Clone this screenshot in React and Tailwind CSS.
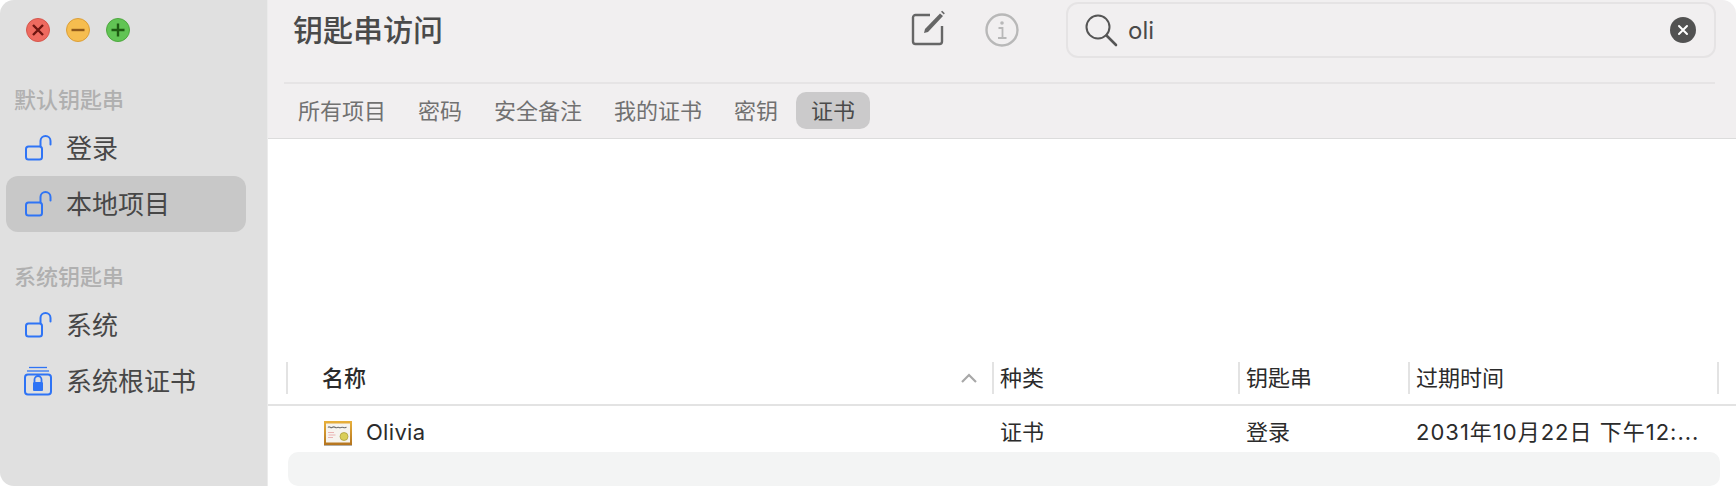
const tabs = ["所有项目", "密码", "安全备注", "我的证书", "密钥", "证书"];

function OpenLock() {
  return (
    <svg width="28" height="28" viewBox="0 0 28 28" fill="none" stroke="#2f74f5" strokeWidth="2" className="shrink-0">
      <rect x="2" y="12.5" width="16" height="13" rx="2.5" />
      <path d="M16.5 12V7a5 5 0 0 1 10 0v3.5" strokeLinecap="round" />
    </svg>
  );
}

function RootLock() {
  return (
    <svg width="28" height="32" viewBox="0 0 28 32" fill="none" stroke="#2f74f5" className="shrink-0">
      <path d="M5 2.5h18" strokeWidth="1.3" />
      <path d="M3 6h22" strokeWidth="1.3" />
      <rect x="1" y="9.5" width="26" height="20" rx="3" strokeWidth="2" />
      <path d="M10.5 17v-2.5a3.5 3.5 0 0 1 7 0V17" strokeWidth="1.8" />
      <rect x="9" y="17" width="10" height="9" rx="1" fill="#2f74f5" stroke="none" />
    </svg>
  );
}

function Certificate() {
  return (
    <svg width="28" height="25" viewBox="0 0 28 25" className="mt-[3px] shrink-0">
      <defs>
        <linearGradient id="frame" x1="0" y1="0" x2="0" y2="1">
          <stop offset="0" stopColor="#e9b13c" />
          <stop offset="1" stopColor="#b4741f" />
        </linearGradient>
      </defs>
      <rect x="0" y="0" width="28" height="24" fill="url(#frame)" />
      <rect x="0" y="24" width="28" height="1" fill="#b5b0a8" />
      <rect x="2" y="2.5" width="24" height="19" fill="#f6f4ef" />
      <path d="M4 6.5c1.5-2 2.5 1 4 0s2-1 3.5 0 2-1 3.5 0 2.5-1 4.5 0 2-.5 3 0" fill="none" stroke="#6f6f6f" strokeWidth="1.1" />
      <path d="M4 11.5h6M4.5 14h7M4 16.5h5" stroke="#eab4b4" strokeWidth="1" />
      <circle cx="20" cy="15.5" r="4" fill="#d9cf58" stroke="#a89a36" strokeWidth="0.7" />
    </svg>
  );
}

function SidebarRow({ label, selected, icon }) {
  return (
    <div className={`flex h-[56px] w-[240px] items-center gap-[14px] rounded-[12px] pl-[18px] ${selected ? "bg-[#c8c8c8]" : ""}`}>
      {icon}
      <span className="mt-[2px] text-[26px] leading-none text-[#474747]">{label}</span>
    </div>
  );
}

function Light({ bg, border, children }) {
  return (
    <div className={`flex h-[24px] w-[24px] items-center justify-center rounded-full border ${bg} ${border}`}>
      <svg width="16" height="16" viewBox="0 0 16 16" fill="none" strokeWidth="2.4">
        {children}
      </svg>
    </div>
  );
}

function Sidebar() {
  return (
    <aside className="flex h-[486px] w-[268px] shrink-0 flex-col rounded-l-[14px] border-r border-[#ebebeb] bg-[#e0e0e0] pl-[6px]">
      <div className="ml-[20px] mt-[18px] flex gap-[16px]">
        <Light bg="bg-[#ee6a5f]" border="border-[#d5564c]">
          <path d="M3 3l10 10M13 3L3 13" stroke="#6e1510" />
        </Light>
        <Light bg="bg-[#f6bd4f]" border="border-[#dc9f38]">
          <path d="M1.5 8h13" stroke="#90591a" />
        </Light>
        <Light bg="bg-[#61c454]" border="border-[#4ea83f]">
          <path d="M8 1.5v13M1.5 8h13" stroke="#1e5b12" />
        </Light>
      </div>
      <h2 className="ml-[8px] mt-[42px] h-[32px] text-[22px] font-medium leading-[32px] text-[#b0b0b0]">默认钥匙串</h2>
      <div className="mt-[4px] flex flex-col">
        <SidebarRow label="登录" icon={<OpenLock />} />
        <SidebarRow label="本地项目" selected icon={<OpenLock />} />
      </div>
      <h2 className="ml-[8px] mt-[29px] h-[32px] text-[22px] font-medium leading-[32px] text-[#b0b0b0]">系统钥匙串</h2>
      <div className="mt-[4px] flex flex-col">
        <SidebarRow label="系统" icon={<OpenLock />} />
        <SidebarRow label="系统根证书" icon={<RootLock />} />
      </div>
    </aside>
  );
}

function Toolbar() {
  return (
    <header className="h-[139px] shrink-0 border-b border-[#dcdcdc] bg-[#f1eff0]">
      <div className="flex h-[82px] items-start">
        <h1 className="ml-[25px] mt-[11px] text-[30px] font-medium leading-[38px] text-[#4a4a4a]">钥匙串访问</h1>
        <svg width="36" height="36" viewBox="0 0 36 36" fill="none" className="ml-[467px] mt-[10px]">
          <path d="M20 5H5.5A2.5 2.5 0 0 0 3 7.5v24A2.5 2.5 0 0 0 5.5 34h24a2.5 2.5 0 0 0 2.5-2.5V16" stroke="#666" strokeWidth="2.4" />
          <path d="M14 23l1-4L30 3.5l3 2.5L18 22z" fill="#666" />
          <path d="M31 1.8l1.2-1 2.6 2.4-1 1.3z" fill="#666" />
        </svg>
        <svg width="34" height="34" viewBox="0 0 34 34" fill="none" className="ml-[39px] mt-[13px]">
          <circle cx="17" cy="17" r="15.5" stroke="#b8b8b8" strokeWidth="2.4" />
          <circle cx="17" cy="10" r="1.8" fill="#b8b8b8" />
          <path d="M13.5 15h4v10M13 25h8.5" stroke="#b8b8b8" strokeWidth="1.8" />
        </svg>
        <div className="ml-[47px] mt-[2px] flex h-[56px] w-[650px] items-center rounded-[12px] border-2 border-[#e5e3e4] pl-[16px] pr-[18px]">
          <svg width="34" height="34" viewBox="0 0 34 34" fill="none" stroke="#555" className="shrink-0">
            <circle cx="14" cy="14" r="11.5" strokeWidth="2" />
            <path d="M22.5 22.5L32 32" strokeWidth="2.6" strokeLinecap="round" />
          </svg>
          <span className="ml-[10px] mt-[2px] text-[24px] leading-none text-[#4a4a4a]">oli</span>
          <div className="ml-auto flex h-[26px] w-[26px] items-center justify-center rounded-full bg-[#525252]">
            <svg width="12" height="12" viewBox="0 0 12 12" stroke="#fff" strokeWidth="2" strokeLinecap="round">
              <path d="M2 2l8 8M10 2l-8 8" />
            </svg>
          </div>
        </div>
      </div>
      <div className="ml-[16px] mr-[21px] flex h-[56px] gap-[2px] border-t-2 border-[#e6e4e5] pt-[8px] pl-0">
        {tabs.map((tab, i) => (
          <div
            key={tab}
            className={`flex h-[37px] items-center rounded-[10px] text-[22px] leading-none ${i === 5 ? "bg-[#cbcacb] px-[15px] text-[#4a4a4a]" : "pl-[14px] pr-[16px] text-[#717171]"}`}
          >
            {tab}
          </div>
        ))}
      </div>
    </header>
  );
}

function HeaderCell({ children, className = "" }) {
  return (
    <div className={`flex h-[32px] items-center border-l-2 border-[#e3e3e3] pl-[6px] text-[22px] leading-none text-[#2b2b2b] ${className}`}>
      {children}
    </div>
  );
}

function Table() {
  return (
    <section className="mt-[223px] pl-[18px] pr-[17px]">
      <div className="grid grid-cols-[706px_246px_170px_310px] border-r-2 border-[#e3e3e3]">
        <HeaderCell className="justify-between pl-[34px] pr-[14px] font-medium">
          名称
          <svg width="18" height="12" viewBox="0 0 18 12" fill="none" stroke="#a8a8a8" strokeWidth="2.2">
            <path d="M2 10l7-7 7 7" />
          </svg>
        </HeaderCell>
        <HeaderCell>种类</HeaderCell>
        <HeaderCell>钥匙串</HeaderCell>
        <HeaderCell>过期时间</HeaderCell>
      </div>
      <div className="-ml-[18px] -mr-[17px] mt-[10px] h-[2px] bg-[#e3e3e3]" />
      <div className="grid h-[46px] grid-cols-[706px_246px_170px_310px] items-center pt-[5px] text-[22px] leading-none text-[#2b2b2b]">
        <div className="flex items-center gap-[14px] pl-[38px]">
          <Certificate />
          <span className="tracking-[0.3px]">Olivia</span>
        </div>
        <div className="pl-[8px]">证书</div>
        <div className="pl-[8px]">登录</div>
        <div className="whitespace-nowrap pl-[8px] tracking-[1px]">2031年10月22日 下午12:...</div>
      </div>
      <div className="ml-[2px] h-[34px] w-[1432px] rounded-[10px] bg-[#f3f4f4]" />
    </section>
  );
}

export default function App() {
  return (
    <div className="flex h-[486px] w-[1736px] overflow-hidden bg-white font-['Inter','Noto_Sans_CJK_SC',sans-serif]">
      <Sidebar />
      <main className="flex min-w-0 flex-1 flex-col overflow-hidden rounded-tr-[14px]">
        <Toolbar />
        <Table />
      </main>
    </div>
  );
}
